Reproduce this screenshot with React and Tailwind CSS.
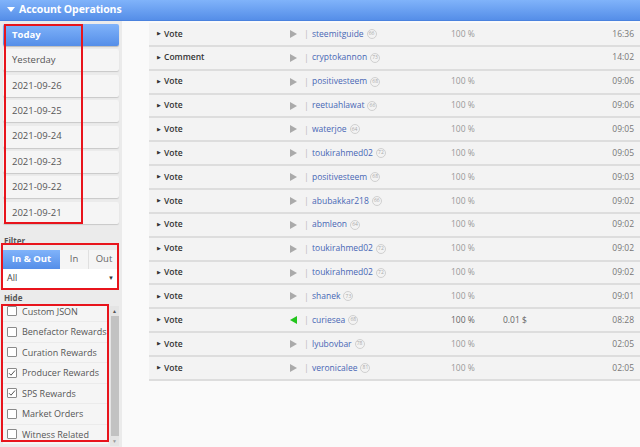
import React from "react";

const dates = ["Today", "Yesterday", "2021-09-26", "2021-09-25", "2021-09-24", "2021-09-23", "2021-09-22", "2021-09-21"];

const rows = [
  ["Vote", "steemitguide", "66", "100 %", "", "16:36"],
  ["Comment", "cryptokannon", "73", "", "", "14:02"],
  ["Vote", "positivesteem", "68", "100 %", "", "09:06"],
  ["Vote", "reetuahlawat", "66", "100 %", "", "09:06"],
  ["Vote", "waterjoe", "64", "100 %", "", "09:05"],
  ["Vote", "toukirahmed02", "72", "100 %", "", "09:05"],
  ["Vote", "positivesteem", "68", "100 %", "", "09:03"],
  ["Vote", "abubakkar218", "66", "100 %", "", "09:02"],
  ["Vote", "abmleon", "64", "100 %", "", "09:02"],
  ["Vote", "toukirahmed02", "72", "100 %", "", "09:02"],
  ["Vote", "toukirahmed02", "72", "100 %", "", "09:02"],
  ["Vote", "shanek", "73", "100 %", "", "09:01"],
  ["Vote", "curiesea", "68", "100 %", "0.01 $", "08:28", true],
  ["Vote", "lyubovbar", "78", "100 %", "", "02:05"],
  ["Vote", "veronicalee", "81", "100 %", "", "02:05"],
];

const hides = [
  ["Custom JSON", false],
  ["Benefactor Rewards", false],
  ["Curation Rewards", false],
  ["Producer Rewards", true],
  ["SPS Rewards", true],
  ["Market Orders", false],
  ["Witness Related", false],
];

function Check({ on }) {
  return (
    <span className="w-[10px] h-[10px] border border-[#8a8a8a] bg-white rounded-[1px] flex items-center justify-center shrink-0">
      {on && (
        <svg width="8" height="8" viewBox="0 0 8 8">
          <path d="M1 4.2 L3 6.2 L7 1.5" stroke="#555" strokeWidth="1" fill="none" />
        </svg>
      )}
    </span>
  );
}

export default function App() {
  return (
    <div className="relative w-[640px] h-[447px] overflow-hidden bg-[#fafafa] font-['Open_Sans',sans-serif]">
      {/* header */}
      <div className="h-[21px] flex items-center pl-[7px] bg-gradient-to-b from-[#80b3fa] to-[#558ee8] border-b border-[#4a82de]">
        <svg width="8" height="6" viewBox="0 0 8 6" className="mr-[4px]">
          <path d="M0 0 L8 0 L4 5 Z" fill="#fff" />
        </svg>
        <span className="text-white font-bold text-[10.5px] tracking-[-0.1px]">Account Operations</span>
      </div>

      <div className="flex">
        {/* sidebar */}
        <div className="w-[122px] h-[426px] bg-[#ebebeb] px-[3px] pt-[3px] flex flex-col">
          <div className="flex flex-col gap-[3.4px]">
            {dates.map((d, i) =>
              i === 0 ? (
                <div key={d} className="h-[22px] rounded-[2px] bg-gradient-to-b from-[#80b3fa] to-[#558ee8] text-white font-bold text-[9.5px] flex items-center pl-[9px] shadow-[0_1px_1px_rgba(0,0,0,0.2)]">
                  {d}
                </div>
              ) : (
                <div key={d} className="h-[22px] rounded-[2px] bg-[#f5f5f5] text-[#555] text-[9.5px] flex items-center pl-[9px] shadow-[0_1px_1px_rgba(0,0,0,0.15)]">
                  {d}
                </div>
              )
            )}
          </div>

          <div className="mt-[11px] text-[8px] font-bold text-[#555] leading-[12px] pl-[1px]">Filter</div>
          <div className="mt-[3px] flex h-[19px] text-[9.5px]">
            <div className="w-[57px] bg-gradient-to-b from-[#80b3fa] to-[#558ee8] text-white font-bold flex items-center justify-center">In &amp; Out</div>
            <div className="w-[29px] bg-[#f5f5f5] text-[#666] flex items-center justify-center border-r border-[#e0e0e0]">In</div>
            <div className="flex-1 bg-[#f5f5f5] text-[#666] flex items-center justify-center">Out</div>
          </div>
          <div className="h-[19px] bg-white flex items-center justify-between pl-[4px] pr-[5px] text-[9px] text-[#444]">
            <span>All</span>
            <span className="text-[6px] text-[#333]">▼</span>
          </div>

          <div className="mt-[4px] text-[8px] font-bold text-[#555] leading-[12px] pl-[1px]">Hide</div>
          <div className="mt-[2px] flex h-[140px] overflow-hidden">
            <div className="w-[105px] flex flex-col overflow-hidden">
              <div className="-mt-[4px] flex flex-col gap-[1px]">
                {hides.map(([h, on]) => (
                  <div key={h} className="h-[19.5px] bg-[#f5f5f5] flex items-center pl-[4px] gap-[5px] text-[9px] text-[#555] whitespace-nowrap">
                    <Check on={on} />
                    <span>{h}</span>
                  </div>
                ))}
              </div>
            </div>
            <div className="w-[9px] ml-[2px] bg-[#e4e4e4] flex flex-col items-center">
              <span className="text-[5px] leading-[10px] text-[#555]">▲</span>
              <div className="w-[8px] flex-1 bg-[#c2c2c2]" />
              <span className="text-[5px] leading-[10px] text-[#999]">▼</span>
            </div>
          </div>
        </div>

        {/* main */}
        <div className="flex-1 pl-[27px] pt-[2px] bg-[#fafafa]">
          <div className="flex flex-col">
            {rows.map(([type, name, rep, pct, val, time, green], i) => (
              <div key={i} className="h-[21.86px] box-content border-b-2 border-[#dddddd] bg-[#f3f3f3] flex items-center pl-[8px] pr-[6px] text-[8.5px]">
                <span className="w-[7px] text-[5px] text-[#333]">▶</span>
                <span className="w-[126px] font-semibold text-[#333]">{type}</span>
                <span className="w-[14px] flex items-center">
                  {green ? (
                    <svg width="7" height="8" viewBox="0 0 7 8"><path d="M7 0 L0 4 L7 8 Z" fill="#22c51c" /></svg>
                  ) : (
                    <svg width="7" height="8" viewBox="0 0 7 8"><path d="M0 0 L7 4 L0 8 Z" fill="#aaaaaa" /></svg>
                  )}
                </span>
                <span className="w-[8px] text-[#bbb] text-[9px]">|</span>
                <span className="w-[139px] flex items-center gap-[3px]">
                  <span className="text-[#4867b5] text-[8.5px]">{name}</span>
                  <span className="w-[10px] h-[10px] rounded-full border border-[#d0d0d0] text-[#aaa] text-[5px] flex items-center justify-center">{rep}</span>
                </span>
                <span className={green ? "w-[52px] text-[#666]" : "w-[52px] text-[#999]"}>{pct}</span>
                <span className="flex-1 text-[#666]">{val}</span>
                <span className="text-[#777] text-[8.5px]">{time}</span>
              </div>
            ))}
          </div>
        </div>
      </div>

      {/* red annotation rectangles */}
      <div className="absolute left-[4px] top-[24px] w-[79px] h-[200px] border-[2.5px] border-[#e8141c]" />
      <div className="absolute left-[1px] top-[243px] w-[118px] h-[47px] border-[2.5px] border-[#e8141c]" />
      <div className="absolute left-[1px] top-[304px] w-[108px] h-[138px] border-[2.5px] border-[#e8141c]" />
    </div>
  );
}
